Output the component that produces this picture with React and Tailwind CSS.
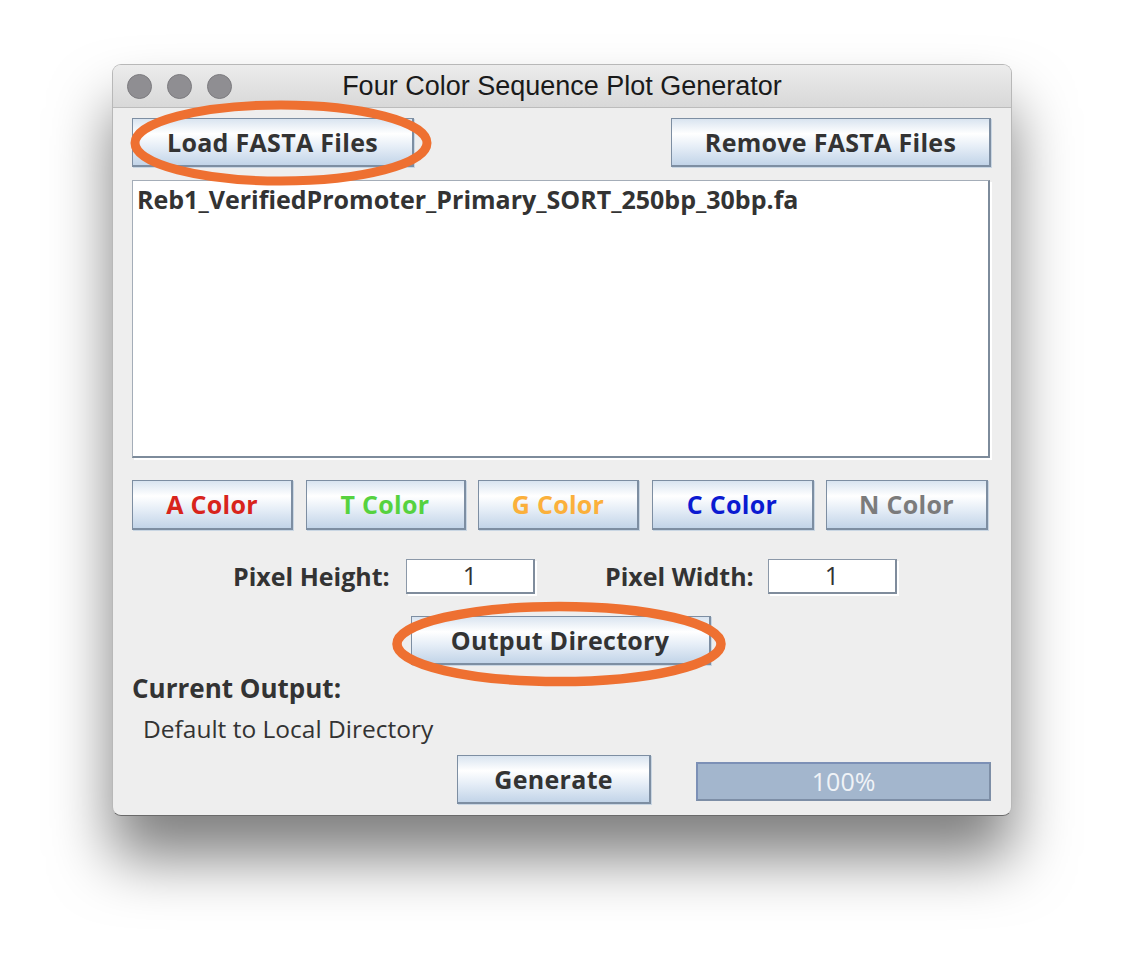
import React from "react";

const btn =
  "flex items-center justify-center border border-[#7d8ea2] border-b-2 border-r-2 bg-[linear-gradient(to_bottom,#d9e4f0_0%,#ffffff_32%,#e6eef7_60%,#c2d4e8_100%)] shadow-[1px_1px_0_#c9d6e3] font-bold text-[25px] tracking-[0.3px] leading-none whitespace-nowrap";

function Field() {
  return (
    <div className="w-[129px] h-[35px] bg-white border-t border-l border-[#8b98a8] border-r-2 border-b-2 border-r-[#7f8c9c] border-b-[#7f8c9c] shadow-[2px_2px_0_#ffffff] flex items-center justify-center text-[25px] text-[#333333] leading-none">
      1
    </div>
  );
}

export default function App() {
  return (
    <div
      className="relative min-h-[976px] bg-white pt-[64px] pl-[112px]"
      style={{ fontFamily: '"Open Sans", "DejaVu Sans", sans-serif' }}
    >
      <div className="w-[900px] h-[752px] rounded-[9px] bg-[#eeeeee] border border-[#b8b8b8] border-b-[#6a6a6a] shadow-[0_42px_60px_rgba(0,0,0,0.5)] flex flex-col overflow-hidden">
        {/* title bar */}
        <div className="relative h-[43px] shrink-0 bg-[linear-gradient(to_bottom,#ececec,#d8d8d8)] border-b border-[#bcbcbc] flex items-center">
          <div className="flex gap-[15px] pl-[14px]">
            <div className="w-[25px] h-[25px] rounded-full bg-[#8f8e92] border border-[#7c7b7f]" />
            <div className="w-[25px] h-[25px] rounded-full bg-[#8f8e92] border border-[#7c7b7f]" />
            <div className="w-[25px] h-[25px] rounded-full bg-[#8f8e92] border border-[#7c7b7f]" />
          </div>
          <div
            className="absolute inset-0 flex items-center justify-center text-[27px] text-[#1a1a1a] pt-[1px] whitespace-nowrap"
            style={{ fontFamily: '"Liberation Sans", Arial, sans-serif' }}
          >
            Four Color Sequence Plot Generator
          </div>
        </div>

        {/* body */}
        <div className="flex flex-col pl-[19px] pr-[20px]">
          <div className="mt-[10px] flex justify-between">
            <div className={`${btn} w-[282px] h-[49px] text-[#333333]`}>Load FASTA Files</div>
            <div className={`${btn} w-[320px] h-[49px] text-[#333333]`}>Remove FASTA Files</div>
          </div>

          <div className="mt-[13px] w-[858px] h-[278px] bg-white border-t border-l border-[#a4adb8] border-r-2 border-b-2 border-r-[#7d8b9b] border-b-[#7d8b9b] shadow-[2px_2px_0_#ffffff] px-[4px] pt-[3px]">
            <div className="text-[25px] font-bold text-[#333333] leading-[30px] whitespace-nowrap">
              Reb1_VerifiedPromoter_Primary_SORT_250bp_30bp.fa
            </div>
          </div>

          <div className="mt-[22px] w-[856px] flex justify-between">
            <div className={`${btn} w-[161px] h-[50px] text-[#d8241c]`}>A Color</div>
            <div className={`${btn} w-[160px] h-[50px] text-[#56d23f]`}>T Color</div>
            <div className={`${btn} w-[161px] h-[50px] text-[#fbb03b]`}>G Color</div>
            <div className={`${btn} w-[162px] h-[50px] text-[#0b1ad1]`}>C Color</div>
            <div className={`${btn} w-[162px] h-[50px] text-[#7b7b7b]`}>N Color</div>
          </div>

          <div className="mt-[28px] flex items-center h-[36px]">
            <div className="ml-[101px] w-[155px] text-[25px] font-bold text-[#333333] leading-none whitespace-nowrap">
              Pixel Height:
            </div>
            <div className="ml-[18px]">
              <Field />
            </div>
            <div className="ml-[70px] w-[145px] text-[25px] font-bold text-[#333333] leading-none whitespace-nowrap">
              Pixel Width:
            </div>
            <div className="ml-[18px]">
              <Field />
            </div>
          </div>

          <div className="mt-[22px] flex justify-center pr-[2px]">
            <div className={`${btn} w-[300px] h-[49px] text-[#333333]`}>Output Directory</div>
          </div>

          <div className="mt-[8px] text-[26px] font-bold text-[#333333] leading-[30px] whitespace-nowrap">
            Current Output:
          </div>
          <div className="mt-[11px] ml-[11px] text-[24.5px] text-[#333333] leading-[30px] whitespace-nowrap">
            Default to Local Directory
          </div>

          <div className="mt-[11px] flex items-start">
            <div className={`${btn} ml-[325px] w-[195px] h-[49px] text-[#333333]`}>Generate</div>
            <div className="ml-[45px] mt-[7px] w-[296px] h-[39px] bg-[#a3b6cd] border-2 border-[#7d8ea6] border-t-[#7c90b6] border-l-[#7c90b6] flex items-center justify-center text-[25px] text-[#f0f3f7] leading-none">
              100%
            </div>
          </div>
        </div>
      </div>

      {/* annotation ellipses */}
      <svg
        className="absolute left-0 top-0 pointer-events-none"
        width="1124"
        height="976"
        viewBox="0 0 1124 976"
      >
        <ellipse cx="281" cy="143" rx="146" ry="38" fill="none" stroke="#ee7031" strokeWidth="9" />
        <ellipse cx="559" cy="644" rx="162" ry="37.5" fill="none" stroke="#ee7031" strokeWidth="9.5" />
      </svg>
    </div>
  );
}
